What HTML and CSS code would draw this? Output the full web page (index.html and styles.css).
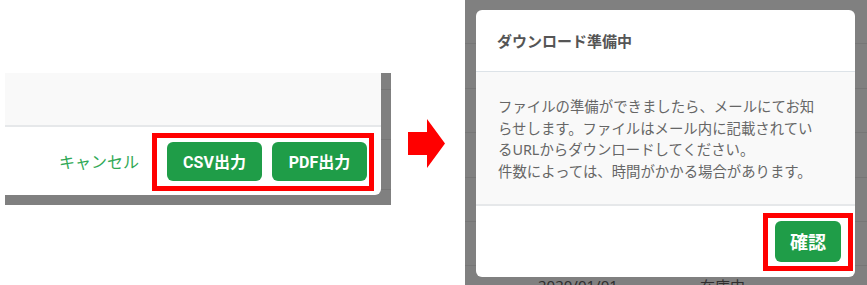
FILE: index.html
```html
<!DOCTYPE html>
<html lang="ja">
<head>
  <meta charset="UTF-8">
  <meta name="viewport" content="width=device-width, initial-scale=1.0">
  <title>ダウンロード手順</title>
  <link rel="stylesheet" href="styles.css">
</head>
<body>
  <!-- 出力モーダルの切り抜き -->
  <div class="shot-left">
    <div class="modal-mini">
      <div class="mini-body"></div>
      <div class="mini-footer">
        <a class="cancel">キャンセル</a>
        <button class="btn btn-out">CSV出力</button>
        <button class="btn btn-out">PDF出力</button>
      </div>
    </div>
    <div class="mark mark-out"></div>
  </div>

  <svg class="arrow" width="37" height="49" viewBox="0 0 37 49">
    <polygon points="0,13 19,13 19,0 37,24.5 19,49 19,36 0,36" fill="#ff0000"/>
  </svg>

  <!-- 準備中モーダルの切り抜き -->
  <div class="shot-right">
    <div class="bg-row"></div>
    <div class="bg-row"></div>
    <div class="bg-row"></div>
    <div class="bg-row"></div>
    <div class="bg-row"></div>
    <div class="bg-row"></div>
    <div class="bg-row bg-text">
      <span class="bg-date">2020/01/01</span>
      <span class="bg-status">在庫中</span>
    </div>

    <div class="modal">
      <div class="modal-header">ダウンロード準備中</div>
      <div class="modal-body">
        ファイルの準備ができましたら、メールにてお知<br>
        らせします。ファイルはメール内に記載されてい<br>
        るURLからダウンロードしてください。<br>
        件数によっては、時間がかかる場合があります。
      </div>
      <div class="modal-footer">
        <button class="btn btn-ok">確認</button>
      </div>
    </div>
    <div class="mark mark-ok"></div>
  </div>
</body>
</html>
```

FILE: styles.css
```css
/* 手順説明用のキャプチャ風レイアウト */
body {
  margin: 0;
  background-color: #fff;
  font-family: "Noto Sans", "Noto Sans CJK JP", sans-serif;
  display: flex;
  align-items: flex-start;
  height: 285px;
  overflow: hidden;
}

.btn {
  border: none;
  border-radius: 6px;
  background-color: #1f9d48;
  color: #fff;
  font-family: Roboto, "Noto Sans CJK JP", sans-serif;
  font-weight: bold;
  padding: 0;
  cursor: pointer;
}

/* 赤枠の注釈 */
.mark {
  position: absolute;
  border: 5px solid #ff0000;
  box-sizing: border-box;
}

/* 左側 */
.shot-left {
  position: relative;
  margin: 73px 0 0 5px;
  width: 386px;
  height: 132px;
  background: repeating-linear-gradient(#808080 0 16px, #767676 16px 17px, #808080 17px 50px);
}

.modal-mini {
  width: 376px;
  height: 122px;
  background-color: #fff;
  border-bottom-right-radius: 6px;
  overflow: hidden;
}

.mini-body {
  height: 52px;
  background-color: #f9f9f9;
  border-bottom: 2px solid #e6e8ea;
}

.mini-footer {
  height: 68px;
  display: flex;
  justify-content: flex-end;
  align-items: center;
  padding-right: 14px;
  gap: 10px;
}

.cancel {
  color: #2fa855;
  font-size: 16px;
  margin-right: 18px;
}

.btn-out {
  width: 95px;
  height: 39px;
  font-size: 16px;
}

.mark-out {
  left: 147px;
  top: 60px;
  width: 222px;
  height: 58px;
}

.arrow {
  margin: 119px 0 0 17px;
  display: block;
}

/* 右側 */
.shot-right {
  position: relative;
  margin-left: 20px;
  width: 402px;
  height: 285px;
  background-color: #808080;
  overflow: hidden;
}

.bg-row {
  height: 43.4px;
  border-bottom: 1px solid #767676;
}

.bg-text {
  position: relative;
  color: #2e2e2e;
  font-size: 15px;
}

.bg-date {
  position: absolute;
  left: 73px;
  top: 9px;
}

.bg-status {
  position: absolute;
  left: 235px;
  top: 9px;
}

.modal {
  position: absolute;
  left: 11px;
  top: 10px;
  width: 379px;
  height: 267px;
  background-color: #fff;
  border-radius: 6px;
  overflow: hidden;
}

.modal-header {
  height: 61px;
  border-bottom: 1px solid #dde3e8;
  padding-left: 21px;
  display: flex;
  align-items: center;
  font-size: 15px;
  font-weight: bold;
  color: #555;
}

.modal-body {
  background-color: #f9f9f9;
  border-bottom: 2px solid #e6e8ea;
  padding: 24px 0 22px 22px;
  font-size: 14.4px;
  line-height: 21.6px;
  color: #666;
  white-space: nowrap;
}

.modal-footer {
  height: 70px;
  display: flex;
  justify-content: flex-end;
  align-items: center;
  padding-right: 14px;
}

.btn-ok {
  width: 66px;
  height: 41px;
  font-size: 18px;
}

.mark-ok {
  left: 298px;
  top: 213px;
  width: 90px;
  height: 58px;
}
```
